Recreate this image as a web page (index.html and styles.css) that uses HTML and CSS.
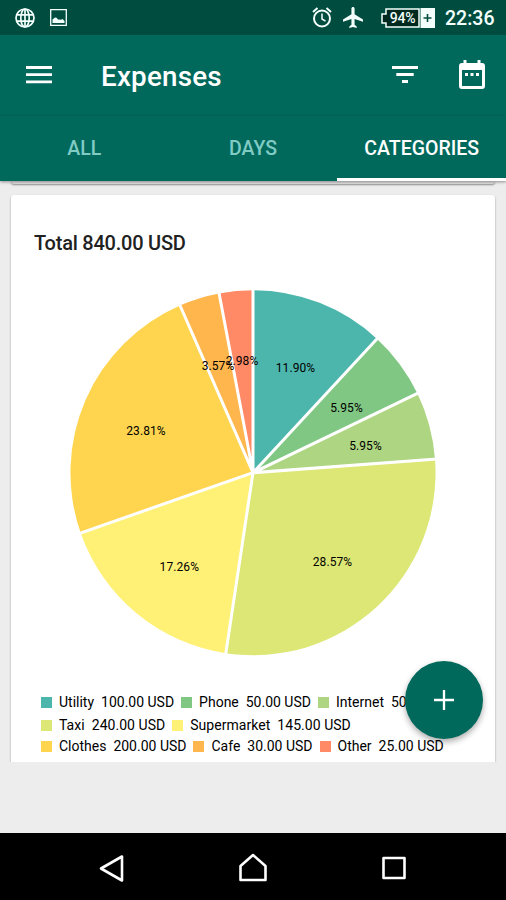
FILE: index.html
```html
<!DOCTYPE html>
<html lang="en">
<head>
<meta charset="utf-8">
<title>Expenses</title>
<link rel="stylesheet" href="styles.css">
</head>
<body>
<div class="screen">
  <div class="status">
    <svg class="globe" width="20" height="20" viewBox="0 0 20 20" fill="none" stroke="currentColor" stroke-width="1.7"><circle cx="10" cy="10" r="9"/><ellipse cx="10" cy="10" rx="4.2" ry="9"/><path d="M10 1v18M2 6.8h16M2 13.2h16"/></svg>
    <svg class="picture" width="17" height="17" viewBox="0 0 17 17"><path d="M.7.7h15.6v15.6H.7z" fill="none" stroke="currentColor" stroke-width="1.3"/><path d="M2.500 14v-3.500l2.500-2 1.500.2L8 10.500l3 .2 1.500-.7 2 2V14z" fill="currentColor"/></svg>
    <svg class="alarm" width="20" height="21" viewBox="0 0 20 21" fill="none" stroke="currentColor"><circle cx="10" cy="11.500" r="8" stroke-width="2"/><path d="M1 5l4.500-4M19 5l-4.500-4" stroke-width="1.900"/><path d="M10 6.500v5.500l3.500 2.200" stroke-width="1.500"/></svg>
    <svg class="plane" width="20" height="21" viewBox="2 2 19 20" preserveAspectRatio="none"><path d="M21 16v-2l-8-5V3.500C13 2.670 12.330 2 11.500 2S10 2.670 10 3.500V9l-8 5v2l8-2.500V19l-2 1.500V22l3.500-1 3.500 1v-1.500L13 19v-5.500z" fill="currentColor"/></svg>
    <div class="battery"><svg width="54" height="20" viewBox="0 0 54 20"><path d="M5 1h33v18H5v-4H1V6h4z" fill="#00291f" stroke="currentColor" stroke-width="1.500"/><path d="M39.500 0H54v20H39.500z" fill="currentColor"/><path d="M46.500 6v8M42.500 10h8" stroke="#004d40" stroke-width="1.600"/></svg><span class="level">94%</span></div>
    <span class="clock">22:36</span>
  </div>
  <header class="bar">
    <svg class="menu" width="26" height="18" viewBox="0 0 26 18"><path d="M0 1.500h26M0 8.700h26M0 15.900h26" stroke="currentColor" stroke-width="2.800"/></svg>
    <h1>Expenses</h1>
    <svg class="filter" width="26" height="17" viewBox="0 0 26 17"><path d="M0 1.500h26M4.300 8.500h17.400M10 15.500h6" stroke="currentColor" stroke-width="2.800"/></svg>
    <svg class="calendar" width="26" height="29" viewBox="0 0 26 29"><path fill-rule="evenodd" d="M4.500 0h3v3h11V0h3v3h1.500q3 0 3 3v20q0 3-3 3H3q-3 0-3-3V6q0-3 3-3h1.500zM3 10v16h20V10z" fill="currentColor"/><path d="M6 13h3v3H6zM11.500 13h3v3h-3zM17 13h3v3h-3z" fill="currentColor"/></svg>
  </header>
  <nav class="tabs"><span>ALL</span><span>DAYS</span><span class="active">CATEGORIES</span></nav>
  <main class="content">
    <div class="previous"></div>
    <section class="card">
      <h2>Total 840.00 USD</h2>
      <svg class="pie" width="438" height="390" viewBox="-219 -192.700 438 390">
        <path fill="#4db6ac" d="M0 0V-182.500A182.500 182.500 0 0 1 124.100-133.800z"/>
        <path fill="#81c784" d="M0 0L124.100-133.800A182.500 182.500 0 0 1 164.400-79.200z"/>
        <path fill="#aed581" d="M0 0L164.400-79.200A182.500 182.500 0 0 1 182-13.600z"/>
        <path fill="#dce775" d="M0 0L182-13.600A182.500 182.500 0 0 1-27.200 180.500z"/>
        <path fill="#fff176" d="M0 0L-27.200 180.500A182.500 182.500 0 0 1-172.300 60.300z"/>
        <path fill="#ffd54f" d="M0 0L-172.300 60.300A182.500 182.500 0 0 1-73-167.300z"/>
        <path fill="#ffb74d" d="M0 0L-73-167.300A182.500 182.500 0 0 1-33.900-179.300z"/>
        <path fill="#ff8a65" d="M0 0L-33.900-179.300A182.500 182.500 0 0 1 0-182.500z"/>
        <path class="gaps" d="M0 0V-184M0 0L125-135M0 0L166-80M0 0L184-13.700M0 0L-27.400 182M0 0L-174 60.900M0 0L-73.600-168.700M0 0L-34.200-181"/>
        <g class="percent">
          <text x="42.500" y="-100.500">11.90%</text><text x="93.500" y="-61">5.95%</text><text x="112.500" y="-22.500">5.95%</text><text x="79.500" y="93.500">28.57%</text><text x="-73.700" y="98.500">17.26%</text><text x="-107" y="-37.300">23.81%</text><text x="-35" y="-102.500">3.57%</text><text x="-11" y="-107.700">2.98%</text>
        </g>
      </svg>
      <div class="legend">
        <div class="row"><span class="item utility">Utility&nbsp; 100.00 USD</span><span class="item phone">Phone&nbsp; 50.00 USD</span><span class="item internet">Internet&nbsp; 50.00 USD</span></div>
        <div class="row"><span class="item taxi">Taxi&nbsp; 240.00 USD</span><span class="item market">Supermarket&nbsp; 145.00 USD</span></div>
        <div class="row"><span class="item clothes">Clothes&nbsp; 200.00 USD</span><span class="item cafe">Cafe&nbsp; 30.00 USD</span><span class="item other">Other&nbsp; 25.00 USD</span></div>
      </div>
    </section>
    <div class="fab"><svg width="20" height="20" viewBox="0 0 20 20"><path d="M10 0v20M0 10h20" stroke="currentColor" stroke-width="2.300"/></svg></div>
  </main>
  <footer class="nav">
    <svg width="28" height="30" viewBox="0 0 28 30"><path d="M24 3.500v24L3 15.500z"/></svg>
    <svg width="28" height="30" viewBox="0 0 28 30"><path d="M1.500 13L14 2l12.500 11v14h-25z"/></svg>
    <svg width="28" height="30" viewBox="0 0 28 30"><path d="M3.500 5h21v20h-21z"/></svg>
  </footer>
</div>
</body>
</html>
```

FILE: styles.css
```css
* { box-sizing: border-box; }
body { margin: 0; font-family: Roboto, "Liberation Sans", sans-serif; }
svg { display: block; flex: none; }
.screen { width: 506px; height: 900px; display: flex; flex-direction: column; overflow: hidden; background: #ededed; }
.status { height: 35px; flex: none; display: flex; align-items: center; padding: 0 11px 0 15px; background: #004d40; color: #f4fffc; }
.picture { margin-left: 15px; }
.alarm { margin-left: auto; }
.plane { margin-left: 11px; }
.battery { position: relative; margin-left: 18px; }
.level { position: absolute; left: 5px; top: 0; width: 33px; line-height: 20px; text-align: center; font-size: 14px; font-weight: 500; letter-spacing: -.3px; }
.clock { margin-left: 10px; width: 50px; font-size: 19.500px; font-weight: 500; line-height: 35px; padding-top: 2px; white-space: nowrap; }
.bar { height: 81px; flex: none; display: flex; align-items: center; padding: 0 21px 0 26px; background: #00695c; color: #fff; }
h1 { margin: 0 auto 0 49px; padding-top: 2px; font-size: 27.800px; font-weight: 500; line-height: 34px; letter-spacing: .2px; }
.calendar { margin-left: 41px; }
.bar .calendar { margin-top: -2px; }
.bar .menu, .bar .filter { margin-top: -2px; }
.tabs { height: 65px; flex: none; display: grid; grid-template-columns: 1fr 1fr 1fr; background: #00695c; color: #80cbc4; font-size: 19.500px; font-weight: 500; line-height: 66px; text-align: center; position: relative; z-index: 1; box-shadow: 0 1px 3px #0006; }
.tabs span { height: 65px; }
.tabs .active { color: #fff; border-bottom: 3px solid #fff; }
.content { flex: 1; min-height: 0; padding: 0 11px; position: relative; }
.previous { height: 3px; background: #e0e0e0; border-radius: 0 0 3px 3px; box-shadow: 0 1px 2px #0006; }
.card { height: 567px; margin-top: 11px; padding: 33px 23px 0; background: #fff; border-radius: 3px 3px 0 0; box-shadow: 0 1px 2px #0006; clip-path: inset(-2px -3px 0); }
h2 { margin: 0; font-size: 20px; font-weight: 500; line-height: 30px; letter-spacing: -.23px; color: #212121; }
.pie { margin-top: 22px; }
.gaps { stroke: #fff; stroke-width: 3; fill: none; }
.percent { font-size: 12px; letter-spacing: .1px; text-anchor: middle; fill: #000; }
.legend { margin: 21px 0 0 7px; font-size: 14px; line-height: 22px; color: #000; }
.row { display: flex; gap: 7px; white-space: nowrap; }
.row:nth-child(2) { padding-top: 1px; margin-bottom: -1px; letter-spacing: .04px; }
.item { display: flex; align-items: center; }
.item::before { content: ""; width: 11px; height: 11px; margin-right: 7px; background: var(--tint); }
.utility { --tint: #4db6ac; }
.phone { --tint: #81c784; }
.internet { --tint: #aed581; }
.taxi { --tint: #dce775; }
.market { --tint: #fff176; }
.clothes { --tint: #ffd54f; }
.cafe { --tint: #ffb74d; }
.other { --tint: #ff8a65; }
.fab { position: absolute; right: 23px; top: 480px; width: 78px; height: 78px; display: grid; place-items: center; border-radius: 50%; background: #00695c; color: #fff; box-shadow: 0 3px 6px #0005; }
.nav { height: 67px; flex: none; display: flex; justify-content: center; gap: 113px; padding-top: 20px; background: #000; }
.nav svg { fill: none; stroke: #fff; stroke-width: 2.600; stroke-linejoin: round; }
```
